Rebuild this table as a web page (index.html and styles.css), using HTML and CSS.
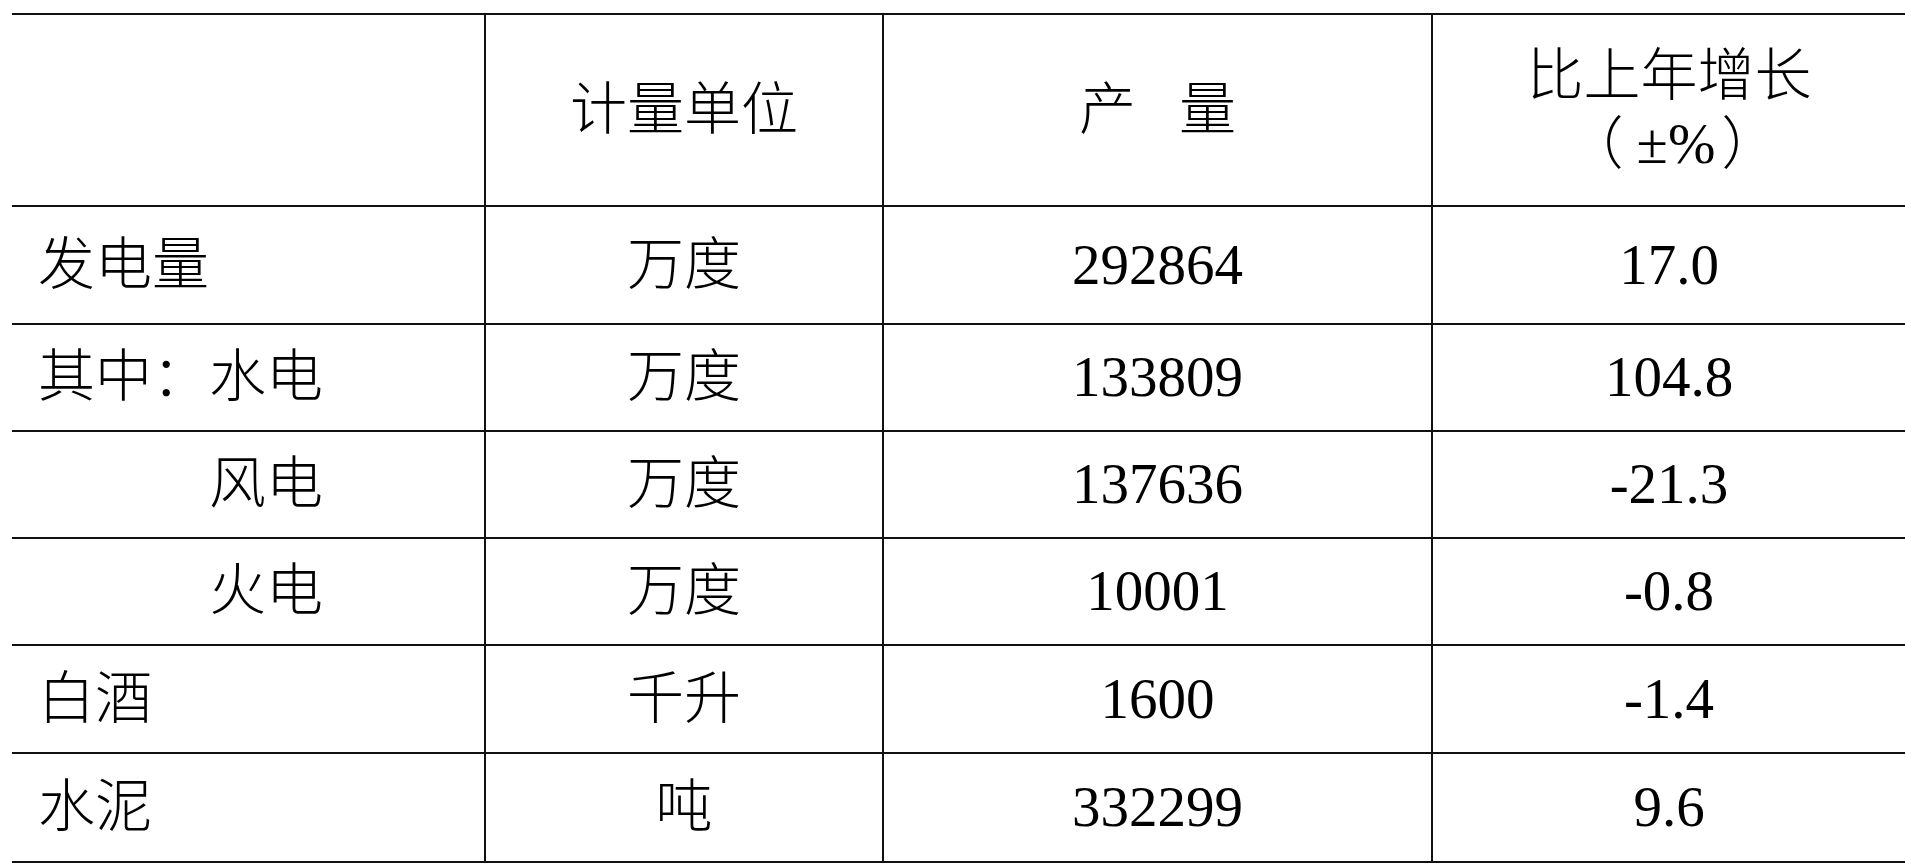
FILE: index.html
```html
<!DOCTYPE html>
<html lang="zh-CN">
<head>
<meta charset="utf-8">
<title>主要工业产品产量</title>
<link rel="stylesheet" href="styles.css">
</head>
<body>
<table class="stats">
  <colgroup>
    <col class="c-name">
    <col class="c-unit">
    <col class="c-qty">
    <col class="c-growth">
  </colgroup>
  <thead>
    <tr class="head-row">
      <th></th>
      <th>计量单位</th>
      <th>产<span class="gap"></span>量</th>
      <th class="two-line">比上年增长<br><span class="lp">（</span>±%<span class="rp">）</span></th>
    </tr>
  </thead>
  <tbody>
    <tr class="r1"><td class="name">发电量</td><td>万度</td><td class="num">292864</td><td class="num">17.0</td></tr>
    <tr class="r2"><td class="name">其中：水电</td><td>万度</td><td class="num">133809</td><td class="num">104.8</td></tr>
    <tr class="r3"><td class="name indent">风电</td><td>万度</td><td class="num">137636</td><td class="num">-21.3</td></tr>
    <tr class="r4"><td class="name indent">火电</td><td>万度</td><td class="num">10001</td><td class="num">-0.8</td></tr>
    <tr class="r5"><td class="name">白酒</td><td>千升</td><td class="num">1600</td><td class="num">-1.4</td></tr>
    <tr class="r6"><td class="name">水泥</td><td>吨</td><td class="num">332299</td><td class="num">9.6</td></tr>
  </tbody>
</table>
</body>
</html>
```

FILE: styles.css
```css
html {
  overflow: hidden;
  background: #fff;
}

body {
  margin: 13px 0 0 12px;
  color: #000;
  font-family: "Liberation Serif", "Noto Sans CJK SC", serif;
  font-size: 57px;
  font-weight: 300;
}

.stats {
  border-collapse: collapse;
  table-layout: fixed;
  width: 1893px;
}

.c-name { width: 473px; }
.c-unit { width: 398px; }
.c-qty { width: 549px; }
.c-growth { width: 473px; }

.stats th,
.stats td {
  border-top: 2px solid #111;
  border-bottom: 2px solid #111;
  border-left: 2px solid #111;
  border-right: 2px solid #111;
  padding: 0;
  text-align: center;
  vertical-align: middle;
  font-weight: 300;
  line-height: 1.2;
  white-space: nowrap;
}

.stats tr > :first-child { border-left: none; }
.stats tr > :last-child { border-right: none; }

.head-row { height: 192px; }
.two-line { line-height: 86px; }
.gap { display: inline-block; width: 43px; }

.lp,
.rp {
  display: inline-block;
  width: 50px;
}

.lp { text-align: right; padding-right: 20px; }
.rp { text-align: left; padding-left: 6px; }

.r1 { height: 118px; }
.r2, .r3, .r4 { height: 107px; }
.r5 { height: 108px; }
.r6 { height: 109px; }

.stats td.name {
  text-align: left;
  padding-left: 26px;
}

.stats td.indent { padding-left: 197px; }
```
